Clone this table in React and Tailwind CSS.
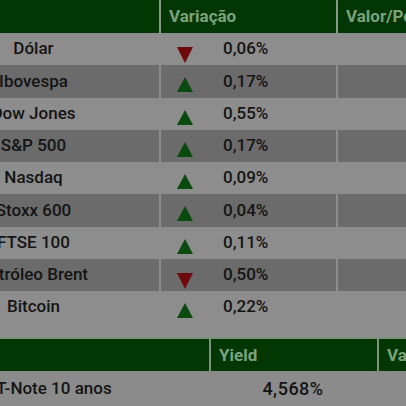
import React from "react";

const rows = [
  { name: "Dólar", dir: "down", v: "0,06%" },
  { name: "Ibovespa", dir: "up", v: "0,17%" },
  { name: "Dow Jones", dir: "up", v: "0,55%" },
  { name: "S&P 500", dir: "up", v: "0,17%" },
  { name: "Nasdaq", dir: "up", v: "0,09%" },
  { name: "Stoxx 600", dir: "up", v: "0,04%" },
  { name: "FTSE 100", dir: "up", v: "0,11%" },
  { name: "Petróleo Brent", dir: "down", v: "0,50%" },
  { name: "Bitcoin", dir: "up", v: "0,22%" },
];

function Tri({ dir }) {
  if (dir === "up")
    return (
      <svg width="16" height="15" viewBox="0 0 16 15" className="mt-[12px]">
        <polygon points="8,0 16,15 0,15" fill="#0b4a0f" />
      </svg>
    );
  return (
    <svg width="16" height="16" viewBox="0 0 16 16" className="mt-[14px]">
      <polygon points="0,0 16,0 8,16" fill="#6e0a0c" />
    </svg>
  );
}

export default function App() {
  return (
    <div
      className="w-[406px] h-[406px] overflow-hidden bg-[#8d8d8d] text-[17px] text-[#141414] font-medium"
      style={{ fontFamily: "Roboto, 'Noto Sans', sans-serif" }}
    >
      <div className="ml-[-92px] w-[700px] flex flex-col">
        <div className="flex h-[33px] bg-[#023602] text-[#7ba27b] font-bold">
          <div className="w-[253px] border-r-2 border-[#8a978a]" />
          <div className="w-[177px] border-r-2 border-[#8a978a] pl-2 flex items-center">Variação</div>
          <div className="flex-1 pl-2 flex items-center">Valor/Pontos</div>
        </div>
        {rows.map((r, i) => (
          <div
            key={r.name}
            className={`flex h-[32.25px] ${i % 2 === 0 ? "bg-[#8d8d8d]" : "bg-[#6b6b6b]"}`}
          >
            <div className="w-[253px] border-r-2 border-[#8d8d8d] flex items-center justify-center">
              {r.name}
            </div>
            <div className="w-[177px] border-r-2 border-[#8d8d8d] flex items-start pl-4">
              <Tri dir={r.dir} />
              <div className="ml-[30px] h-full flex items-center">{r.v}</div>
            </div>
            <div className="flex-1" />
          </div>
        ))}
      </div>
      <div className="h-[14px]" />
      <div className="ml-[-103px] w-[700px] flex flex-col">
        <div className="flex h-[34px] bg-[#023602] border-t-2 border-[#7f917f] text-[#7ba27b] font-bold">
          <div className="w-[314px] border-r-2 border-[#7f917f]" />
          <div className="w-[168px] border-r-2 border-[#7f917f] pl-2 flex items-center">Yield</div>
          <div className="flex-1 pl-2 flex items-center">Variação</div>
        </div>
        <div className="flex h-[35px] bg-[#8b8b8b]">
          <div className="w-[314px] flex items-center justify-center">T-Note 10 anos</div>
          <div className="w-[168px] flex items-center justify-center pr-[4px] text-[18px] tracking-[0.5px]">4,568%</div>
          <div className="flex-1" />
        </div>
      </div>
    </div>
  );
}
